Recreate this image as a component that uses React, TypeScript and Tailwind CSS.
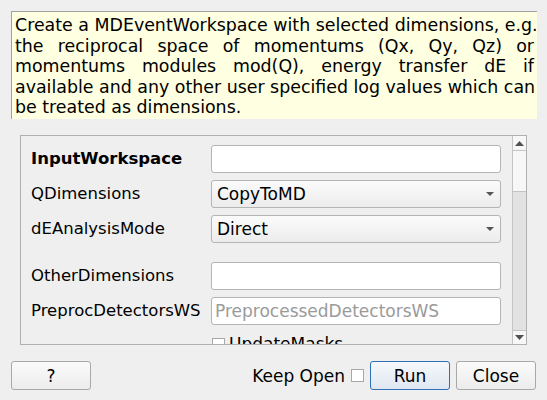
import React from "react";

const ROWS = [
  { label: "InputWorkspace", kind: "text", bold: true },
  { label: "QDimensions", kind: "combo", value: "CopyToMD" },
  { label: "dEAnalysisMode", kind: "combo", value: "Direct" },
  { label: "", kind: "spacer" },
  { label: "OtherDimensions", kind: "text" },
  { label: "PreprocDetectorsWS", kind: "text", placeholder: "PreprocessedDetectorsWS" },
];

const DESC = [
  "Create a MDEventWorkspace with selected dimensions, e.g.",
  "the reciprocal space of momentums (Qx, Qy, Qz) or",
  "momentums modules mod(Q), energy transfer dE if",
  "available and any other user specified log values which can",
];

function Arrow({ up }: { up?: boolean }) {
  return (
    <svg width="9" height="5" viewBox="0 0 9 5">
      <path d={up ? "M0 5 L4.5 0 L9 5 Z" : "M0 0 L9 0 L4.5 5 Z"} fill="#505050" />
    </svg>
  );
}

function Field({ row }: { row: (typeof ROWS)[number] }) {
  if (row.kind === "combo") {
    return (
      <div className="flex h-[28px] items-center justify-between rounded-[3px] border border-[#b4b4b4] bg-gradient-to-b from-[#fbfbfb] to-[#ececec] pl-[5px] pr-[6px]">
        <span>{row.value}</span>
        <svg width="8" height="4" viewBox="0 0 8 4">
          <path d="M0 0 L8 0 L4 4 Z" fill="#555" />
        </svg>
      </div>
    );
  }
  return (
    <div className="flex h-[28px] items-center rounded-[3px] border border-[#b4b4b4] bg-white pl-[3px] text-[#9a9a9a]">
      {row.placeholder}
    </div>
  );
}

export default function App() {
  return (
    <div className="h-[400px] w-[547px] overflow-hidden bg-[#efefef] pt-[11px] font-['DejaVu_Sans',sans-serif] text-[17px] leading-[20px] text-black">
      <div className="ml-[11px] h-[108px] w-[526px] border-l border-t border-[#a0a0a0] bg-[#ffffe1] pl-[3px] pr-[3px] pt-[3px] text-[17.4px] leading-[20.5px]">
        {DESC.map((line) => (
          <div key={line} className="whitespace-nowrap text-justify [text-align-last:justify]">
            {line}
          </div>
        ))}
        <div>be treated as dimensions.</div>
      </div>

      <div className="ml-[20px] mt-[16px] flex h-[210px] w-[507px] border border-[#b0b0b0]">
        <div className="flex-1 overflow-hidden pl-[10px] pt-[9px]">
          <div className="grid grid-cols-[180px_290px] gap-y-[7px]">
            {ROWS.map((row, i) =>
              row.kind === "spacer" ? (
                <div key={i} className="col-span-2 h-[5px]" />
              ) : (
                <React.Fragment key={i}>
                  <div className={`flex h-[28px] items-center whitespace-nowrap text-[16.5px] ${row.bold ? "font-bold" : ""}`}>{row.label}</div>
                  <Field row={row} />
                </React.Fragment>
              ),
            )}
            <div />
            <div className="flex items-center gap-[4px] pl-[1px] pt-[2px]">
              <span className="h-[13px] w-[13px] border border-[#a8a8a8] bg-white" />
              <span>UpdateMasks</span>
            </div>
          </div>
        </div>
        <div className="flex w-[14px] flex-col border-l border-[#c4c4c4] bg-[#e2e2e2]">
          <div className="flex h-[15px] items-center justify-center border-b border-[#c4c4c4] bg-[#f7f7f7]">
            <Arrow up />
          </div>
          <div className="h-[41px] border-b border-[#c4c4c4] bg-[#f7f7f7]" />
          <div className="flex-1" />
          <div className="flex h-[14px] items-center justify-center border-t border-[#c4c4c4] bg-[#f7f7f7]">
            <Arrow />
          </div>
        </div>
      </div>

      <div className="mt-[16px] flex h-[29px] items-center pl-[11px] pr-[11px]">
        <button className="h-[29px] w-[80px] rounded-[3px] border border-[#a8a8a8] bg-gradient-to-b from-[#fbfbfb] to-[#ececec]">
          ?
        </button>
        <div className="flex-1" />
        <span>Keep Open</span>
        <span className="ml-[6px] h-[13px] w-[13px] border border-[#a8a8a8] bg-white" />
        <button className="ml-[6px] h-[29px] w-[80px] rounded-[3px] border border-[#2f6fb3] bg-gradient-to-b from-[#f6f9fc] to-[#dfe7f0]">
          Run
        </button>
        <button className="ml-[6px] h-[29px] w-[80px] rounded-[3px] border border-[#a8a8a8] bg-gradient-to-b from-[#fbfbfb] to-[#ececec]">
          Close
        </button>
      </div>
    </div>
  );
}
